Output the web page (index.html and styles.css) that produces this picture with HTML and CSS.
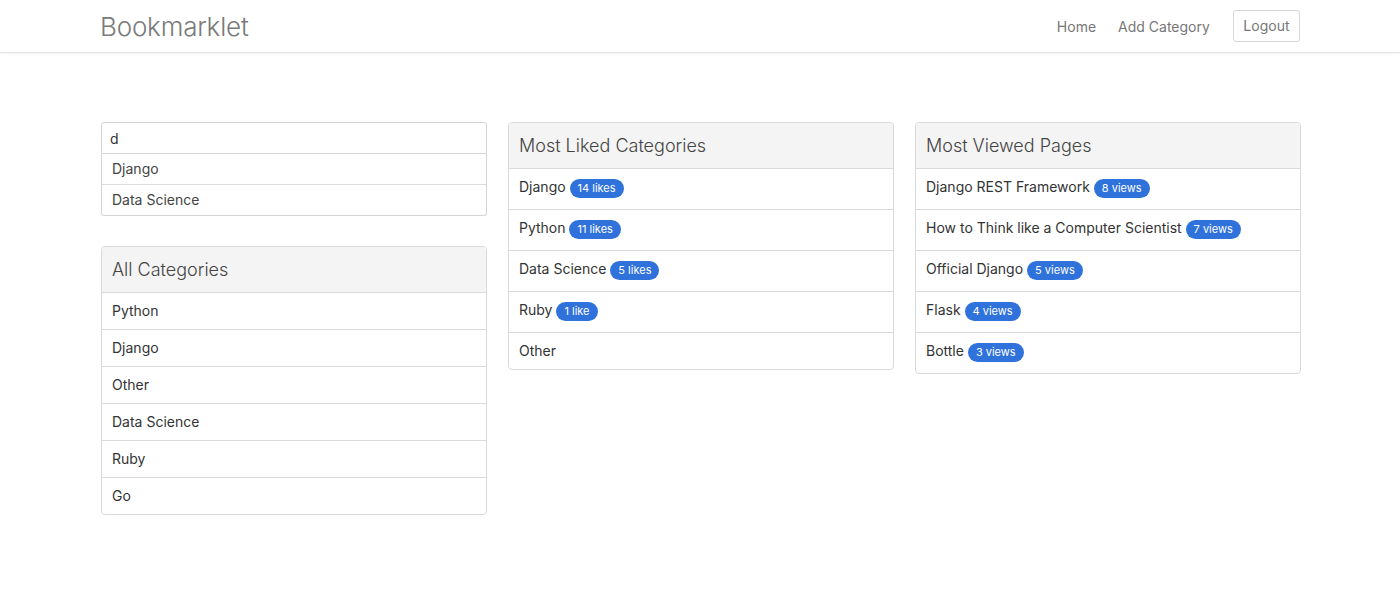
FILE: index.html
```html
<!DOCTYPE html>
<html>
<head>
<meta charset="utf-8">
<title>Bookmarklet</title>
<link rel="stylesheet" href="styles.css">
</head>
<body>
<nav class="navbar">
  <div class="container nav-inner">
    <a class="brand" href="#">Bookmarklet</a>
    <div class="nav-links">
      <a class="nav-link" href="#">Home</a>
      <a class="nav-link last" href="#">Add Category</a>
      <a class="btn-outline" href="#">Logout</a>
    </div>
  </div>
</nav>
<main class="container content">
  <div class="col">
    <div class="search">
      <input class="search-input" type="text" value="d">
      <ul class="suggest">
        <li class="suggest-item">Django</li>
        <li class="suggest-item">Data Science</li>
      </ul>
    </div>
    <div class="card">
      <div class="card-header">All Categories</div>
      <ul class="list">
        <li class="item">Python</li>
        <li class="item">Django</li>
        <li class="item">Other</li>
        <li class="item">Data Science</li>
        <li class="item">Ruby</li>
        <li class="item">Go</li>
      </ul>
    </div>
  </div>
  <div class="col">
    <div class="card">
      <div class="card-header">Most Liked Categories</div>
      <ul class="list">
        <li class="item badged">Django <span class="badge">14 likes</span></li>
        <li class="item badged">Python <span class="badge">11 likes</span></li>
        <li class="item badged">Data Science <span class="badge">5 likes</span></li>
        <li class="item badged">Ruby <span class="badge">1 like</span></li>
        <li class="item">Other</li>
      </ul>
    </div>
  </div>
  <div class="col">
    <div class="card">
      <div class="card-header">Most Viewed Pages</div>
      <ul class="list">
        <li class="item badged">Django REST Framework <span class="badge">8 views</span></li>
        <li class="item badged">How to Think like a Computer Scientist <span class="badge">7 views</span></li>
        <li class="item badged">Official Django <span class="badge">5 views</span></li>
        <li class="item badged">Flask <span class="badge">4 views</span></li>
        <li class="item badged">Bottle <span class="badge">3 views</span></li>
      </ul>
    </div>
  </div>
</main>
</body>
</html>
```
FILE: styles.css
```css
* { box-sizing: border-box; }
html, body { margin: 0; padding: 0; }
body {
  font-family: Inter, "Noto Sans", "Liberation Sans", sans-serif;
  font-size: 14px;
  color: #333;
  background: #fff;
}
a { text-decoration: none; }
ul { list-style: none; margin: 0; padding: 0; }

.container {
  width: 1200px;
  margin: 0 auto;
}

.navbar {
  height: 53px;
  border-bottom: 1px solid #e5e5e5;
  box-shadow: 0 1px 3px rgba(0,0,0,0.06);
}
.nav-inner {
  height: 52px;
  display: flex;
  align-items: center;
  justify-content: space-between;
}
.brand {
  font-size: 26px;
  font-weight: 300;
  color: #7a7a7a;
  letter-spacing: -0.2px;
}
.nav-links {
  display: flex;
  align-items: center;
}
.nav-link {
  color: #777;
  font-size: 14px;
  margin-right: 22px;
}
.nav-link.last { margin-right: 23px; }
.btn-outline {
  color: #777;
  font-size: 14px;
  border: 1px solid #d7d7d7;
  border-radius: 3px;
  height: 32px;
  line-height: 30px;
  padding: 0 9.5px;
  display: block;
}

.content {
  margin-top: 69px;
  display: grid;
  grid-template-columns: repeat(3, 386px);
  gap: 21px;
  padding-left: 1px;
  align-items: start;
}

.search { margin-bottom: 30px; }
.search-input {
  display: block;
  width: 100%;
  height: 32px;
  border: 1px solid #d5d5d5;
  border-radius: 3px 3px 0 0;
  padding: 0 8px;
  font-family: inherit;
  font-size: 14px;
  color: #333;
  outline: none;
}
.suggest {
  border: 1px solid #d5d5d5;
  border-top: none;
  border-radius: 0 0 3px 3px;
}
.suggest-item {
  padding: 5px 10px;
  line-height: 20px;
  color: #444;
  border-bottom: 1px solid #ddd;
}
.suggest-item:last-child { border-bottom: none; }

.card {
  border: 1px solid #dadada;
  border-radius: 4px;
  overflow: hidden;
}
.card-header {
  background: #f4f4f4;
  border-bottom: 1px solid #dadada;
  font-size: 18px;
  font-weight: 300;
  color: #444;
  padding: 0 10px;
  height: 46px;
  line-height: 45px;
}
.item {
  padding: 8px 10px;
  line-height: 20px;
  border-bottom: 1px solid #dadada;
  color: #333;
}
.item:last-child { border-bottom: none; }
.item.badged { height: 41px; }
.item.badged:last-child { height: 40px; }
.badge {
  display: inline-block;
  background: #2f72dc;
  color: #fff;
  font-size: 11px;
  line-height: 19px;
  height: 19px;
  padding: 0 8px;
  border-radius: 10px;
  vertical-align: middle;
}
```
